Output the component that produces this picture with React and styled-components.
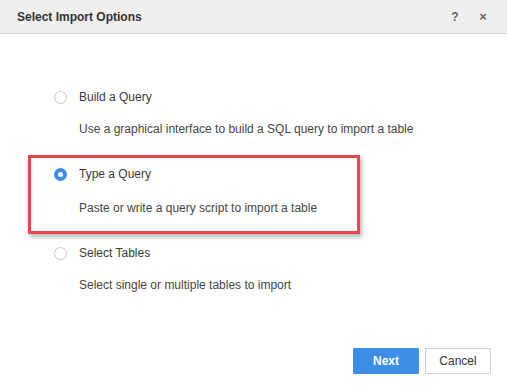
import React from "react";
import styled, { createGlobalStyle } from "styled-components";

const Global = createGlobalStyle`
  html, body { margin: 0; padding: 0; background: #fff; }
  body { font-family: "Liberation Sans", Arial, sans-serif; }
  * { box-sizing: border-box; }
`;

const Dialog = styled.div`
  width: 507px;
  height: 388px;
  display: flex;
  flex-direction: column;
  background: #fff;
`;

const Header = styled.div`
  height: 34px;
  flex: none;
  display: flex;
  align-items: center;
  padding: 0 10px 0 17px;
  background: #efefef;
  border-bottom: 1px solid #d2d2d2;
`;

const Title = styled.div`
  flex: 1;
  font-size: 12px;
  font-weight: bold;
  color: #333;
`;

const HeaderIcon = styled.span`
  width: 28px;
  text-align: center;
  font-size: ${(p) => p.$size || 12}px;
  font-weight: bold;
  color: #666;
`;

const Body = styled.div`
  flex: 1;
  display: flex;
  flex-direction: column;
  padding: 56px 0 0 54px;
`;

const Option = styled.div`
  position: relative;
  display: flex;
  flex-direction: column;
  margin-bottom: ${(p) => p.$mb}px;
  ${(p) =>
    p.$highlight &&
    `
    &::after {
      content: "";
      position: absolute;
      left: -26px;
      top: -12px;
      width: 326px;
      height: 73px;
      border: 3px solid #e8464a;
      box-shadow: 2px 3px 4px rgba(0,0,0,0.28);
      pointer-events: none;
    }
  `}
`;

const LabelRow = styled.label`
  display: flex;
  align-items: center;
  height: 14px;
  font-size: 12px;
  color: #3a3a3a;
`;

const Radio = styled.span`
  width: 13px;
  height: 13px;
  border-radius: 50%;
  margin-right: 12px;
  flex: none;
  ${(p) =>
    p.$checked
      ? `border: 4px solid #3a8ee6; background: #fff;`
      : `border: 1px solid #c6c6c6; background: #fff;`}
`;

const Desc = styled.div`
  margin: ${(p) => p.$gap}px 0 0 25px;
  font-size: 12px;
  color: #454545;
  line-height: 14px;
`;

const Footer = styled.div`
  display: flex;
  justify-content: flex-end;
  gap: 6px;
  padding: 0 16px 14px 0;
`;

const Button = styled.button`
  width: 66px;
  height: 26px;
  font-family: inherit;
  font-size: 12px;
  cursor: pointer;
  border-radius: 1px;
  ${(p) =>
    p.$primary
      ? `background: #3d8ee6; color: #fff; border: 1px solid #3d8ee6; font-weight: bold;`
      : `background: #fff; color: #333; border: 1px solid #cfcfcf;`}
`;

const options = [
  { label: "Build a Query", desc: "Use a graphical interface to build a SQL query to import a table", gap: 18, mb: 31 },
  { label: "Type a Query", desc: "Paste or write a query script to import a table", gap: 20, mb: 31, checked: true },
  { label: "Select Tables", desc: "Select single or multiple tables to import", gap: 18, mb: 0 },
];

export default function App() {
  return (
    <>
      <Global />
      <Dialog>
        <Header>
          <Title>Select Import Options</Title>
          <HeaderIcon>?</HeaderIcon>
          <HeaderIcon $size={13}>×</HeaderIcon>
        </Header>
        <Body>
          {options.map((o) => (
            <Option key={o.label} $mb={o.mb} $highlight={o.checked}>
              <LabelRow>
                <Radio $checked={o.checked} />
                {o.label}
              </LabelRow>
              <Desc $gap={o.gap}>{o.desc}</Desc>
            </Option>
          ))}
        </Body>
        <Footer>
          <Button $primary>Next</Button>
          <Button>Cancel</Button>
        </Footer>
      </Dialog>
    </>
  );
}
